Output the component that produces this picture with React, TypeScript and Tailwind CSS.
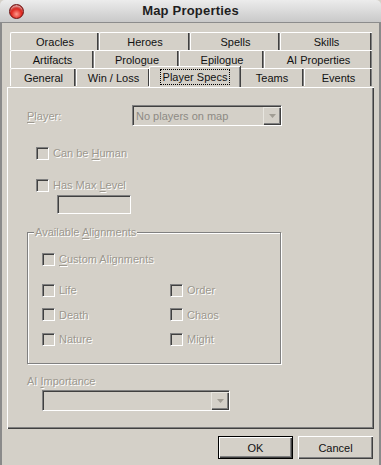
import React from 'react';

const face = 'bg-[#d4d0c8]';
const disabledText = 'text-[#9c988f] [text-shadow:1px_1px_0_#ffffff]';

function U({ children }: { children: React.ReactNode }) {
  return <span className="underline underline-offset-2 decoration-1">{children}</span>;
}

function Tab({ label, w, selected }: { label: string; w: number; selected?: boolean }) {
  if (selected) {
    return (
      <div
        className={`relative z-10 -mt-[2px] h-[21px] -mx-[1px] flex items-start justify-center pt-[2px] ${face} border-t border-l border-white rounded-tl-[2px] shadow-[inset_-1px_0_0_#808080,1px_0_0_#404040]`}
        style={{ width: w + 2 }}
      >
        <span className="border border-dotted border-black px-[2px] leading-[14px] text-[#111]">{label}</span>
      </div>
    );
  }
  return (
    <div
      className={`h-[18px] flex items-center justify-center ${face} border-t border-l border-white rounded-tl-[2px] shadow-[inset_-1px_0_0_#808080,inset_-2px_0_0_#404040] text-[#111]`}
      style={{ width: w }}
    >
      {label}
    </div>
  );
}

function Check({ label, className = '' }: { label: React.ReactNode; className?: string }) {
  return (
    <div className={`flex items-center gap-[4px] h-[14px] ${className}`}>
      <div className="w-[13px] h-[13px] border-t border-l border-[#808080] border-b border-r border-b-white border-r-white shadow-[inset_1px_1px_0_#404040] bg-[#d4d0c8]" />
      <span className={disabledText}>{label}</span>
    </div>
  );
}

function Combo({ w, text }: { w: number; text?: string }) {
  return (
    <div
      className="h-[21px] flex items-center justify-between border-t border-l border-[#808080] border-b border-r border-b-white border-r-white shadow-[inset_1px_1px_0_#404040] pl-[3px] pr-[1px]"
      style={{ width: w }}
    >
      <span className="text-[#8d8a84]">{text}</span>
      <div className="w-[17px] h-[17px] flex items-center justify-center bg-[#d4d0c8] border-t border-l border-[#e8e6e0] shadow-[inset_-1px_-1px_0_#808080,1px_1px_0_#404040]">
        <svg width="7" height="4" viewBox="0 0 7 4">
          <path d="M0 0 H7 L3.5 4 Z" fill="#a19d94" />
        </svg>
      </div>
    </div>
  );
}

function Button({ label, def }: { label: string; def?: boolean }) {
  return (
    <div
      className={`w-[75px] h-[23px] flex items-center justify-center ${face} text-[#111] ${
        def
          ? 'border border-black shadow-[inset_1px_1px_0_#ffffff,inset_-1px_-1px_0_#404040,inset_-2px_-2px_0_#808080]'
          : 'shadow-[inset_1px_1px_0_#ffffff,inset_-1px_-1px_0_#404040,inset_-2px_-2px_0_#808080]'
      }`}
    >
      {label}
    </div>
  );
}

export default function App() {
  return (
    <div className="w-[381px] h-[465px] bg-[#d4d0c8] flex flex-col text-[11px] leading-[14px] font-['Liberation_Sans',Arial,sans-serif] overflow-hidden">
      <div className="h-[23px] flex items-center relative rounded-t-[5px] bg-gradient-to-b from-[#ececec] to-[#c9c9c9] border-b border-[#8c8c8c]">
        <div className="absolute left-[9px] top-[4px] w-[15px] h-[15px] rounded-full border border-[#6e1010] bg-[radial-gradient(circle_at_50%_70%,#ff9a8c_0%,#e02a22_45%,#8c0f0c_100%)] shadow-[inset_0_3px_2px_-1px_rgba(255,255,255,0.6)]" />
        <div className="flex-1 text-center text-[13px] font-bold text-[#1e1e1e] tracking-[0.2px]">Map Properties</div>
      </div>

      <div className="flex-1 flex flex-col border-l-2 border-r-2 border-[#8a8a8a] pt-[9px]">
        <div className="ml-[8px] flex flex-col">
          <div className="flex">
            <Tab label="Oracles" w={89} />
            <Tab label="Heroes" w={91} />
            <Tab label="Spells" w={90} />
            <Tab label="Skills" w={92} />
          </div>
          <div className="flex">
            <Tab label="Artifacts" w={84} />
            <Tab label="Prologue" w={85} />
            <Tab label="Epilogue" w={85} />
            <Tab label="AI Properties" w={108} />
          </div>
          <div className="flex">
            <Tab label="General" w={66} />
            <Tab label="Win / Loss" w={74} />
            <Tab label="Player Specs" w={89} selected />
            <Tab label="Teams" w={65} />
            <Tab label="Events" w={68} />
          </div>
        </div>

        <div className="ml-[5px] w-[367px] h-[342px] border-t border-l border-white shadow-[inset_-1px_-1px_0_#404040,inset_-2px_-2px_0_#808080] pl-[19px] pt-[17px] flex flex-col">
          <div className="flex items-center">
            <span className={`w-[105px] ${disabledText}`}><U>P</U>layer:</span>
            <Combo w={150} text="No players on map" />
          </div>

          <Check className="ml-[9px] mt-[20px]" label={<>Can be <U>H</U>uman</>} />
          <Check className="ml-[9px] mt-[18px]" label={<>Has Max <U>L</U>evel</>} />
          <div className="ml-[30px] mt-[3px] w-[74px] h-[19px] border-t border-l border-[#808080] border-b border-r border-b-white border-r-white shadow-[inset_1px_1px_0_#404040]" />

          <div className="relative mt-[18px] w-[254px] h-[132px] border border-[#808080] shadow-[1px_1px_0_#ffffff,inset_1px_1px_0_#ffffff] pl-[14px] pt-[19px]">
            <span className={`absolute -top-[8px] left-[6px] px-[1px] bg-[#d4d0c8] ${disabledText}`}>
              Available <U>A</U>lignments
            </span>
            <Check label={<><U>C</U>ustom Alignments</>} />
            <div className="mt-[17px] grid grid-cols-[128px_1fr] gap-y-[10.5px]">
              <Check label="Life" />
              <Check label="Order" />
              <Check label="Death" />
              <Check label="Chaos" />
              <Check label="Nature" />
              <Check label="Might" />
            </div>
          </div>

          <span className={`mt-[10px] ${disabledText}`}>AI <U>I</U>mportance</span>
          <div className="ml-[15px] mt-[2px]">
            <Combo w={188} />
          </div>
        </div>

        <div className="mt-[7px] ml-[216px] flex gap-[5px]">
          <Button label="OK" def />
          <Button label="Cancel" />
        </div>
      </div>
    </div>
  );
}
